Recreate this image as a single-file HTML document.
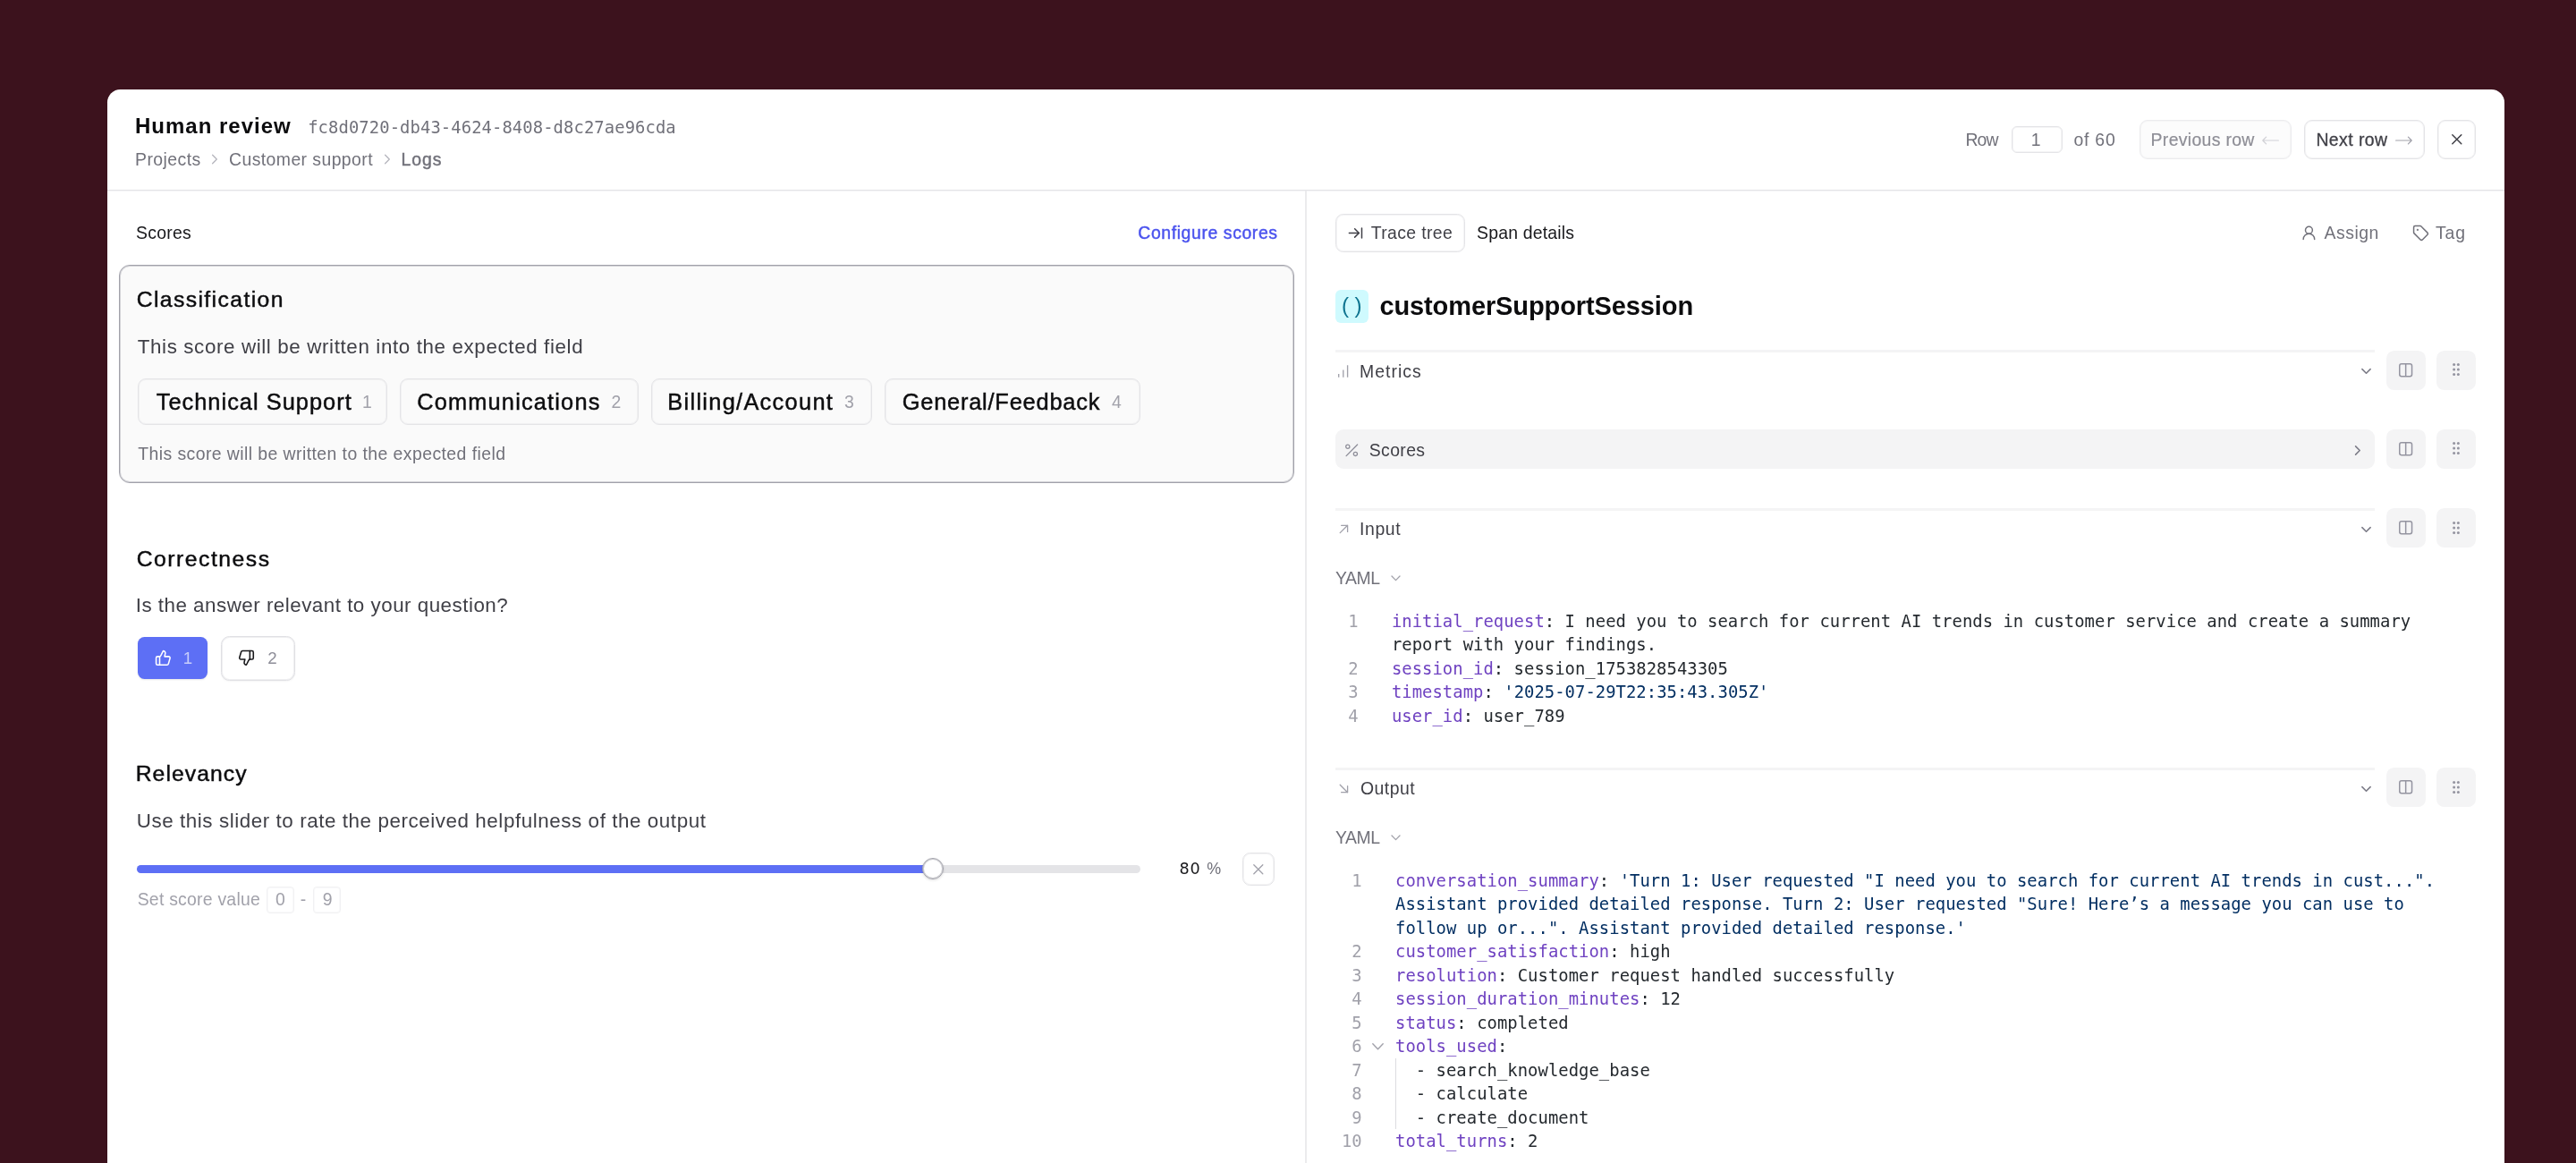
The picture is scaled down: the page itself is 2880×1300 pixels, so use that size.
<!DOCTYPE html>
<html lang="en"><head><meta charset="utf-8"><title>Human review</title>
<style>
html,body{margin:0;padding:0;}
body{width:2880px;height:1300px;overflow:hidden;background:#3c121d;font-family:"Liberation Sans",sans-serif;position:relative;}
#wrap{position:absolute;left:0;top:0;width:2880px;height:1300px;overflow:hidden;will-change:transform;}
#modal{position:absolute;left:120px;top:100px;width:2680px;height:1300px;background:#fff;border-radius:14.5px 14.5px 0 0;}
.t{position:absolute;white-space:pre;}
.b{position:absolute;box-sizing:border-box;}
svg{position:absolute;overflow:visible;}
.code{position:absolute;letter-spacing:0.048px;font-family:"DejaVu Sans Mono","Liberation Mono",monospace;font-size:18.85px;line-height:26.5px;color:#24292e;white-space:pre;}
.ln{position:absolute;font-family:"DejaVu Sans Mono","Liberation Mono",monospace;font-size:18.85px;line-height:26.5px;color:#a1a1aa;white-space:pre;text-align:right;}
.k{color:#6f42c1;}
.s{color:#032f62;}
@media (min-resolution:1.5dppx) and (max-width:1500px){html{zoom:.5;}}

</style></head>
<body>
<div id="wrap">
<div id="modal"></div>
<!-- header -->
<div class="b" style="left:120px;top:212px;width:2680px;height:2px;background:linear-gradient(#e4e4e7 50%,#f3f3f5 50%)"></div>
<div class="b" style="left:1459px;top:213px;width:2px;height:1100px;background:#ebebed"></div>
<div class="b" style="left:2249px;top:140.5px;width:56.5px;height:30.5px;border:1px solid #e4e4e7;box-shadow:inset 0 0 0 1px #e4e4e766;border-radius:6px;background:#fff"></div>
<div class="b" style="left:2391.5px;top:134px;width:170.5px;height:43.5px;border:1px solid #ececee;box-shadow:inset 0 0 0 1px #ececee66;border-radius:9px;background:#fcfcfc"></div>
<div class="b" style="left:2575.7px;top:134px;width:135.8px;height:43.5px;border:1px solid #e4e4e7;box-shadow:inset 0 0 0 1px #e4e4e766;border-radius:9px;background:#fff"></div>
<div class="b" style="left:2725px;top:134px;width:42.7px;height:43.5px;border:1px solid #e4e4e7;box-shadow:inset 0 0 0 1px #e4e4e766;border-radius:9px;background:#fff"></div>
<!-- breadcrumb chevrons -->
<svg style="left:235.7px;top:172.4px" width="8" height="12" viewBox="0 0 8 12" fill="none" stroke="#b5b5bd" stroke-width="1.3" stroke-linecap="round" stroke-linejoin="round"><path d="M1.6 1.2 L6.3 6 L1.6 10.8"/></svg>
<svg style="left:428.6px;top:172.4px" width="8" height="12" viewBox="0 0 8 12" fill="none" stroke="#b5b5bd" stroke-width="1.3" stroke-linecap="round" stroke-linejoin="round"><path d="M1.6 1.2 L6.3 6 L1.6 10.8"/></svg>
<!-- arrows prev/next -->
<svg style="left:2529.4px;top:151.1px" width="19" height="12" viewBox="0 0 19 12" fill="none" stroke="#d0d0d5" stroke-width="1.2" stroke-linecap="round" stroke-linejoin="round"><path d="M18.4 6 H0.8 M4.6 2.2 L0.8 6 L4.6 9.8"/></svg>
<svg style="left:2677.8px;top:151.1px" width="19" height="12" viewBox="0 0 19 12" fill="none" stroke="#a1a1aa" stroke-width="1.2" stroke-linecap="round" stroke-linejoin="round"><path d="M0.6 6 H18.2 M14.4 2.2 L18.2 6 L14.4 9.8"/></svg>
<!-- close X -->
<svg style="left:2740.6px;top:149.9px" width="11.6" height="11.6" viewBox="0 0 11.6 11.6" fill="none" stroke="#3f3f46" stroke-width="1.5" stroke-linecap="round"><path d="M0.8 0.8 L10.8 10.8 M10.8 0.8 L0.8 10.8"/></svg>

<!-- classification card -->
<div class="b" style="left:133px;top:296px;width:1313.5px;height:243.5px;border:1px solid #a1a1aa;box-shadow:inset 0 0 0 1px #a1a1aa70;border-radius:12px;background:#fafafa"></div>
<div class="b" style="left:153.8px;top:423px;width:279.4px;height:52px;border:1px solid #e4e4e7;box-shadow:inset 0 0 0 1px #e4e4e766;border-radius:9px;background:#fafafa"></div>
<div class="b" style="left:446.6px;top:423px;width:267.8px;height:52px;border:1px solid #e4e4e7;box-shadow:inset 0 0 0 1px #e4e4e766;border-radius:9px;background:#fafafa"></div>
<div class="b" style="left:727.8px;top:423px;width:247.6px;height:52px;border:1px solid #e4e4e7;box-shadow:inset 0 0 0 1px #e4e4e766;border-radius:9px;background:#fafafa"></div>
<div class="b" style="left:989.2px;top:423px;width:285.7px;height:52px;border:1px solid #e4e4e7;box-shadow:inset 0 0 0 1px #e4e4e766;border-radius:9px;background:#fafafa"></div>

<!-- thumbs -->
<div class="b" style="left:154px;top:712px;width:78px;height:47.2px;border-radius:7.5px;background:#5d6ff5;box-shadow:0 1px 2px rgba(0,0,0,.10)"></div>
<div class="b" style="left:246.6px;top:711px;width:83.2px;height:49.5px;border:1px solid #e0e0e4;border-radius:9.5px;background:#fff;box-shadow:inset 0 0 0 1px #e0e0e480,0 1px 2px rgba(0,0,0,.04)"></div>
<svg style="left:173.2px;top:726.4px" width="18.85" height="18.85" viewBox="0 0 24 24" fill="none" stroke="#fff" stroke-width="2" stroke-linecap="round" stroke-linejoin="round"><path d="M7 10v12"/><path d="M15 5.88 14 10h5.83a2 2 0 0 1 1.92 2.56l-2.33 8A2 2 0 0 1 17.5 22H4a2 2 0 0 1-2-2v-8a2 2 0 0 1 2-2h2.76a2 2 0 0 0 1.79-1.11L12 2a3.13 3.13 0 0 1 3 3.88Z"/></svg>
<svg style="left:266.3px;top:726.4px" width="18.85" height="18.85" viewBox="0 0 24 24" fill="none" stroke="#18181b" stroke-width="2" stroke-linecap="round" stroke-linejoin="round"><path d="M17 14V2"/><path d="M9 18.12 10 14H4.17a2 2 0 0 1-1.92-2.56l2.33-8A2 2 0 0 1 6.5 2H20a2 2 0 0 1 2 2v8a2 2 0 0 1-2 2h-2.76a2 2 0 0 0-1.79 1.11L12 22a3.13 3.13 0 0 1-3-3.88Z"/></svg>

<!-- slider -->
<div class="b" style="left:153px;top:966.5px;width:1121.7px;height:9.7px;border-radius:5px;background:#e4e4e7"></div>
<div class="b" style="left:153px;top:966.5px;width:890px;height:9.7px;border-radius:5px;background:#5d6ff5"></div>
<div class="b" style="left:1030.8px;top:959.1px;width:24.4px;height:24.4px;border-radius:12.2px;background:#fff;border:1px solid #a1a1aa;box-shadow:inset 0 0 0 1px #a1a1aa80,0 1px 3px rgba(0,0,0,.12)"></div>
<div class="b" style="left:1388.9px;top:953.3px;width:36.5px;height:36.3px;border:1px solid #e4e4e7;box-shadow:inset 0 0 0 1px #e4e4e766;border-radius:8.7px;background:#fff"></div>
<svg style="left:1401.4px;top:965.6px" width="11.6" height="11.6" viewBox="0 0 11.6 11.6" fill="none" stroke="#a1a1aa" stroke-width="1.3" stroke-linecap="round"><path d="M0.8 0.8 L10.8 10.8 M10.8 0.8 L0.8 10.8"/></svg>
<div class="b" style="left:297.9px;top:991px;width:30.7px;height:30.2px;border:1px solid #f1f1f3;box-shadow:inset 0 0 0 1px #f1f1f366;border-radius:4px;background:#fff"></div>
<div class="b" style="left:350.4px;top:991px;width:30.7px;height:30.2px;border:1px solid #f1f1f3;box-shadow:inset 0 0 0 1px #f1f1f366;border-radius:4px;background:#fff"></div>

<!-- right panel top -->
<div class="b" style="left:1492.7px;top:238.8px;width:145.2px;height:43.6px;border:1px solid #e4e4e7;box-shadow:inset 0 0 0 1px #e4e4e766;border-radius:8.7px;background:#fff"></div>
<svg style="left:1506.3px;top:251.2px" width="18.85" height="18.85" viewBox="0 0 24 24" fill="none" stroke="#3f3f46" stroke-width="1.9" stroke-linecap="round" stroke-linejoin="round"><path d="M17 12H3"/><path d="m11 18 6-6-6-6"/><path d="M21 5v14"/></svg>
<svg style="left:2572.1px;top:251.2px" width="18.85" height="18.85" viewBox="0 0 24 24" fill="none" stroke="#71717a" stroke-width="1.9" stroke-linecap="round" stroke-linejoin="round"><circle cx="12" cy="8" r="5"/><path d="M20 21a8 8 0 0 0-16 0"/></svg>
<svg style="left:2697.4px;top:251.3px" width="18.85" height="18.85" viewBox="0 0 24 24" fill="none" stroke="#71717a" stroke-width="1.9" stroke-linecap="round" stroke-linejoin="round"><path d="M12.586 2.586A2 2 0 0 0 11.172 2H4a2 2 0 0 0-2 2v7.172a2 2 0 0 0 .586 1.414l8.704 8.704a2.426 2.426 0 0 0 3.42 0l6.58-6.58a2.426 2.426 0 0 0 0-3.42z"/><circle cx="7.5" cy="7.5" r=".5" fill="#71717a"/></svg>
<div class="b" style="left:1492.5px;top:323.8px;width:37.6px;height:37.7px;border-radius:6px;background:#cffafe"></div>

<!-- section lines -->
<div class="b" style="left:1492.5px;top:391.3px;width:1162.5px;height:3px;background:#f4f4f5"></div>
<div class="b" style="left:1492.5px;top:480px;width:1162.5px;height:44px;border-radius:9px;background:#f4f4f5"></div>
<div class="b" style="left:1492.5px;top:568px;width:1162.5px;height:3px;background:#f4f4f5"></div>
<div class="b" style="left:1492.5px;top:858px;width:1162.5px;height:3px;background:#f4f4f5"></div>
<svg style="left:1494px;top:406px" width="16" height="18" viewBox="0 0 16 18" fill="none" stroke="#a1a1aa" stroke-width="1.35"><path d="M2.7 15.8 V11.9 M7.8 15.8 V7.4 M12.6 15.8 V2.2"/></svg>
<svg style="left:1503px;top:495px" width="17" height="17" viewBox="0 0 17 17" fill="none" stroke="#8e8e99" stroke-width="1.3" stroke-linecap="round"><path d="M14.6 2 L2.1 14.6"/><circle cx="3.8" cy="4.2" r="2.1"/><circle cx="12.4" cy="12.4" r="2.1"/></svg>
<svg style="left:1496.5px;top:586px" width="11" height="11" viewBox="0 0 11 11" fill="none" stroke="#a1a1aa" stroke-width="1.3" stroke-linecap="round" stroke-linejoin="round"><path d="M1.2 9.6 L9.6 1.3 M2.6 1.3 H9.6 V8.4"/></svg>
<svg style="left:1496.5px;top:876px" width="11" height="11" viewBox="0 0 11 11" fill="none" stroke="#a1a1aa" stroke-width="1.3" stroke-linecap="round" stroke-linejoin="round"><path d="M1.2 1.3 L9.6 9.7 M2.6 9.7 H9.6 V2.6"/></svg>
<svg style="left:1554.5px;top:643.1px" width="11" height="7" viewBox="0 0 11 7" fill="none" stroke="#a1a1aa" stroke-width="1.3" stroke-linecap="round" stroke-linejoin="round"><path d="M1 1 L5.5 5.6 L10 1"/></svg>
<svg style="left:1554.5px;top:933.2px" width="11" height="7" viewBox="0 0 11 7" fill="none" stroke="#a1a1aa" stroke-width="1.3" stroke-linecap="round" stroke-linejoin="round"><path d="M1 1 L5.5 5.6 L10 1"/></svg>
<svg style="left:1534.2px;top:1166px" width="13" height="8" viewBox="0 0 13 8" fill="none" stroke="#a1a1aa" stroke-width="1.4" stroke-linecap="round" stroke-linejoin="round"><path d="M0.8 0.8 L6.5 6.8 L12.2 0.8"/></svg>
<div class="b" style="left:1560px;top:1183.3px;width:1.3px;height:79.2px;background:#dcdce0"></div>
<div class="b" style="left:2667.8px;top:391.5px;width:44px;height:44px;border-radius:8.7px;background:#f4f4f5"></div>
<div class="b" style="left:2724.3px;top:391.5px;width:44px;height:44px;border-radius:8.7px;background:#f4f4f5"></div>
<svg style="left:2681.95px;top:405.80px" width="15.3" height="15.5" viewBox="0 0 15.3 15.5" fill="none" stroke="#9494a0" stroke-width="1.5" stroke-linejoin="round"><rect x="0.75" y="0.75" width="13.8" height="14" rx="2.2"/><path d="M7.65 0.75 V14.75"/></svg>
<svg style="left:2736.35px;top:403.05px" width="20" height="20" viewBox="0 0 20 20" fill="#9494a0"><circle cx="7.65" cy="4.5" r="1.5"/><circle cx="7.65" cy="10" r="1.5"/><circle cx="7.65" cy="15.5" r="1.5"/><circle cx="12.35" cy="4.5" r="1.5"/><circle cx="12.35" cy="10" r="1.5"/><circle cx="12.35" cy="15.5" r="1.5"/></svg>
<div class="b" style="left:2667.8px;top:479.6px;width:44px;height:44px;border-radius:8.7px;background:#f4f4f5"></div>
<div class="b" style="left:2724.3px;top:479.6px;width:44px;height:44px;border-radius:8.7px;background:#f4f4f5"></div>
<svg style="left:2681.95px;top:493.90px" width="15.3" height="15.5" viewBox="0 0 15.3 15.5" fill="none" stroke="#9494a0" stroke-width="1.5" stroke-linejoin="round"><rect x="0.75" y="0.75" width="13.8" height="14" rx="2.2"/><path d="M7.65 0.75 V14.75"/></svg>
<svg style="left:2736.35px;top:491.15px" width="20" height="20" viewBox="0 0 20 20" fill="#9494a0"><circle cx="7.65" cy="4.5" r="1.5"/><circle cx="7.65" cy="10" r="1.5"/><circle cx="7.65" cy="15.5" r="1.5"/><circle cx="12.35" cy="4.5" r="1.5"/><circle cx="12.35" cy="10" r="1.5"/><circle cx="12.35" cy="15.5" r="1.5"/></svg>
<div class="b" style="left:2667.8px;top:568.0px;width:44px;height:44px;border-radius:8.7px;background:#f4f4f5"></div>
<div class="b" style="left:2724.3px;top:568.0px;width:44px;height:44px;border-radius:8.7px;background:#f4f4f5"></div>
<svg style="left:2681.95px;top:582.30px" width="15.3" height="15.5" viewBox="0 0 15.3 15.5" fill="none" stroke="#9494a0" stroke-width="1.5" stroke-linejoin="round"><rect x="0.75" y="0.75" width="13.8" height="14" rx="2.2"/><path d="M7.65 0.75 V14.75"/></svg>
<svg style="left:2736.35px;top:579.55px" width="20" height="20" viewBox="0 0 20 20" fill="#9494a0"><circle cx="7.65" cy="4.5" r="1.5"/><circle cx="7.65" cy="10" r="1.5"/><circle cx="7.65" cy="15.5" r="1.5"/><circle cx="12.35" cy="4.5" r="1.5"/><circle cx="12.35" cy="10" r="1.5"/><circle cx="12.35" cy="15.5" r="1.5"/></svg>
<div class="b" style="left:2667.8px;top:858.1px;width:44px;height:44px;border-radius:8.7px;background:#f4f4f5"></div>
<div class="b" style="left:2724.3px;top:858.1px;width:44px;height:44px;border-radius:8.7px;background:#f4f4f5"></div>
<svg style="left:2681.95px;top:872.40px" width="15.3" height="15.5" viewBox="0 0 15.3 15.5" fill="none" stroke="#9494a0" stroke-width="1.5" stroke-linejoin="round"><rect x="0.75" y="0.75" width="13.8" height="14" rx="2.2"/><path d="M7.65 0.75 V14.75"/></svg>
<svg style="left:2736.35px;top:869.65px" width="20" height="20" viewBox="0 0 20 20" fill="#9494a0"><circle cx="7.65" cy="4.5" r="1.5"/><circle cx="7.65" cy="10" r="1.5"/><circle cx="7.65" cy="15.5" r="1.5"/><circle cx="12.35" cy="4.5" r="1.5"/><circle cx="12.35" cy="10" r="1.5"/><circle cx="12.35" cy="15.5" r="1.5"/></svg>
<svg style="left:2638.95px;top:411.00px" width="13" height="8" viewBox="0 0 13 8" fill="none" stroke="#7c7c88" stroke-width="1.6" stroke-linecap="round" stroke-linejoin="round"><path d="M1.9 1.6 L6.5 6.2 L11.1 1.6"/></svg>
<svg style="left:2638.95px;top:587.50px" width="13" height="8" viewBox="0 0 13 8" fill="none" stroke="#7c7c88" stroke-width="1.6" stroke-linecap="round" stroke-linejoin="round"><path d="M1.9 1.6 L6.5 6.2 L11.1 1.6"/></svg>
<svg style="left:2638.95px;top:877.60px" width="13" height="8" viewBox="0 0 13 8" fill="none" stroke="#7c7c88" stroke-width="1.6" stroke-linecap="round" stroke-linejoin="round"><path d="M1.9 1.6 L6.5 6.2 L11.1 1.6"/></svg>
<svg style="left:2631.7px;top:496.9px" width="8" height="13" viewBox="0 0 8 13" fill="none" stroke="#7c7c88" stroke-width="1.6" stroke-linecap="round" stroke-linejoin="round"><path d="M1.6 1.9 L6.2 6.5 L1.6 11.1"/></svg>

<div class="t" style='left:151.0px;top:129.00px;font-size:24.0px;line-height:24.0px;font-weight:700;color:#0c0c0e;letter-spacing:0.994px;'>Human review</div>
<div class="t" style='left:344.2px;top:134.00px;font-size:18.85px;line-height:18.85px;font-weight:400;color:#71717a;letter-spacing:0.089px;font-family:"DejaVu Sans Mono", "Liberation Mono", monospace;'>fc8d0720-db43-4624-8408-d8c27ae96cda</div>
<div class="t" style='left:151.0px;top:169.00px;font-size:19.42px;line-height:19.42px;font-weight:400;color:#71717a;letter-spacing:0.442px;'>Projects</div>
<div class="t" style='left:256.0px;top:169.00px;font-size:19.42px;line-height:19.42px;font-weight:400;color:#71717a;letter-spacing:0.423px;'>Customer support</div>
<div class="t" style='left:448.4px;top:169.00px;font-size:19.42px;line-height:19.42px;font-weight:400;color:#71717a;letter-spacing:0.970px;-webkit-text-stroke:0.45px #71717a;'>Logs</div>
<div class="t" style='left:2197.4px;top:147.00px;font-size:19.42px;line-height:19.42px;font-weight:400;color:#71717a;letter-spacing:-0.907px;'>Row</div>
<div class="t" style='left:2270.7px;top:147.00px;font-size:19.42px;line-height:19.42px;font-weight:400;color:#71717a;'>1</div>
<div class="t" style='left:2318.6px;top:147.00px;font-size:19.42px;line-height:19.42px;font-weight:400;color:#71717a;letter-spacing:0.730px;'>of 60</div>
<div class="t" style='left:2404.6px;top:147.00px;font-size:19.42px;line-height:19.42px;font-weight:400;color:#8e8e96;letter-spacing:0.322px;-webkit-text-stroke:0.2px #8e8e96;'>Previous row</div>
<div class="t" style='left:2589.4px;top:147.00px;font-size:19.42px;line-height:19.42px;font-weight:400;color:#3f3f46;letter-spacing:0.448px;-webkit-text-stroke:0.3px #3f3f46;'>Next row</div>
<div class="t" style='left:152.0px;top:251.00px;font-size:19.42px;line-height:19.42px;font-weight:400;color:#18181b;letter-spacing:0.259px;'>Scores</div>
<div class="t" style='left:1272.3px;top:251.00px;font-size:19.42px;line-height:19.42px;font-weight:400;color:#4b53ee;letter-spacing:0.600px;-webkit-text-stroke:0.45px #4b53ee;'>Configure scores</div>
<div class="t" style='left:152.7px;top:323.00px;font-size:24.72px;line-height:24.72px;font-weight:400;color:#0c0c0e;letter-spacing:1.394px;-webkit-text-stroke:0.45px #0c0c0e;'>Classification</div>
<div class="t" style='left:153.7px;top:377.00px;font-size:22.4px;line-height:22.4px;font-weight:400;color:#3f3f46;letter-spacing:0.612px;'>This score will be written into the expected field</div>
<div class="t" style='left:174.7px;top:437.00px;font-size:25.39px;line-height:25.39px;font-weight:400;color:#0c0c0e;letter-spacing:1.021px;-webkit-text-stroke:0.45px #0c0c0e;'>Technical Support</div>
<div class="t" style='left:405.1px;top:440.00px;font-size:19.42px;line-height:19.42px;font-weight:400;color:#a1a1aa;'>1</div>
<div class="t" style='left:466.2px;top:437.00px;font-size:25.39px;line-height:25.39px;font-weight:400;color:#0c0c0e;letter-spacing:1.169px;-webkit-text-stroke:0.45px #0c0c0e;'>Communications</div>
<div class="t" style='left:683.5px;top:440.00px;font-size:19.42px;line-height:19.42px;font-weight:400;color:#a1a1aa;'>2</div>
<div class="t" style='left:746.3px;top:437.00px;font-size:25.39px;line-height:25.39px;font-weight:400;color:#0c0c0e;letter-spacing:1.294px;-webkit-text-stroke:0.45px #0c0c0e;'>Billing/Account</div>
<div class="t" style='left:944.0px;top:440.00px;font-size:19.42px;line-height:19.42px;font-weight:400;color:#a1a1aa;'>3</div>
<div class="t" style='left:1008.7px;top:437.00px;font-size:25.39px;line-height:25.39px;font-weight:400;color:#0c0c0e;letter-spacing:0.795px;-webkit-text-stroke:0.45px #0c0c0e;'>General/Feedback</div>
<div class="t" style='left:1243.0px;top:440.00px;font-size:19.42px;line-height:19.42px;font-weight:400;color:#a1a1aa;'>4</div>
<div class="t" style='left:154.2px;top:498.00px;font-size:19.42px;line-height:19.42px;font-weight:400;color:#71717a;letter-spacing:0.432px;'>This score will be written to the expected field</div>
<div class="t" style='left:152.7px;top:613.00px;font-size:24.72px;line-height:24.72px;font-weight:400;color:#0c0c0e;letter-spacing:1.511px;-webkit-text-stroke:0.45px #0c0c0e;'>Correctness</div>
<div class="t" style='left:151.7px;top:666.00px;font-size:22.4px;line-height:22.4px;font-weight:400;color:#3f3f46;letter-spacing:0.487px;'>Is the answer relevant to your question?</div>
<div class="t" style='left:204.8px;top:727.00px;font-size:18.75px;line-height:18.75px;font-weight:400;color:#c7cdfb;'>1</div>
<div class="t" style='left:299.3px;top:727.00px;font-size:18.75px;line-height:18.75px;font-weight:400;color:#8e8e99;'>2</div>
<div class="t" style='left:151.7px;top:853.00px;font-size:24.72px;line-height:24.72px;font-weight:400;color:#0c0c0e;letter-spacing:1.055px;-webkit-text-stroke:0.45px #0c0c0e;'>Relevancy</div>
<div class="t" style='left:152.7px;top:907.00px;font-size:22.4px;line-height:22.4px;font-weight:400;color:#3f3f46;letter-spacing:0.565px;'>Use this slider to rate the perceived helpfulness of the output</div>
<div class="t" style='left:1318.4px;top:963.00px;font-size:17.6px;line-height:17.6px;font-weight:400;color:#18181b;letter-spacing:1.003px;font-family:"DejaVu Sans", "Liberation Sans", sans-serif;'>80</div>
<div class="t" style='left:1349.3px;top:963.00px;font-size:17.92px;line-height:17.92px;font-weight:400;color:#71717a;'>%</div>
<div class="t" style='left:153.7px;top:996.00px;font-size:19.42px;line-height:19.42px;font-weight:400;color:#a1a1aa;letter-spacing:0.238px;'>Set score value</div>
<div class="t" style='left:308.0px;top:996.00px;font-size:19.42px;line-height:19.42px;font-weight:400;color:#a1a1aa;'>0</div>
<div class="t" style='left:335.8px;top:996.00px;font-size:19.42px;line-height:19.42px;font-weight:400;color:#a1a1aa;'>-</div>
<div class="t" style='left:360.8px;top:996.00px;font-size:19.42px;line-height:19.42px;font-weight:400;color:#a1a1aa;'>9</div>
<div class="t" style='left:1532.8px;top:251.00px;font-size:19.42px;line-height:19.42px;font-weight:400;color:#3f3f46;letter-spacing:0.353px;'>Trace tree</div>
<div class="t" style='left:1651.1px;top:251.00px;font-size:19.42px;line-height:19.42px;font-weight:400;color:#18181b;letter-spacing:0.181px;'>Span details</div>
<div class="t" style='left:2598.4px;top:251.00px;font-size:19.42px;line-height:19.42px;font-weight:400;color:#71717a;letter-spacing:0.549px;'>Assign</div>
<div class="t" style='left:2723.1px;top:251.00px;font-size:19.42px;line-height:19.42px;font-weight:400;color:#71717a;letter-spacing:0.798px;'>Tag</div>
<div class="t" style='left:1499.9px;top:330.00px;font-size:24.21px;line-height:24.21px;font-weight:400;color:#0e7490;letter-spacing:6.635px;'>()</div>
<div class="t" style='left:1542.4px;top:328.00px;font-size:29.0px;line-height:29.0px;font-weight:700;color:#0c0c0e;letter-spacing:-0.104px;'>customerSupportSession</div>
<div class="t" style='left:1520.0px;top:406.00px;font-size:19.42px;line-height:19.42px;font-weight:400;color:#3f3f46;letter-spacing:1.029px;'>Metrics</div>
<div class="t" style='left:1530.8px;top:494.00px;font-size:19.42px;line-height:19.42px;font-weight:400;color:#3f3f46;letter-spacing:0.359px;'>Scores</div>
<div class="t" style='left:1520.0px;top:582.00px;font-size:19.42px;line-height:19.42px;font-weight:400;color:#3f3f46;letter-spacing:0.605px;'>Input</div>
<div class="t" style='left:1493.0px;top:637.00px;font-size:19.42px;line-height:19.42px;font-weight:400;color:#71717a;letter-spacing:-0.438px;'>YAML</div>
<div class="t" style='left:1521.0px;top:872.00px;font-size:19.42px;line-height:19.42px;font-weight:400;color:#3f3f46;letter-spacing:0.485px;'>Output</div>
<div class="t" style='left:1493.0px;top:927.00px;font-size:19.42px;line-height:19.42px;font-weight:400;color:#71717a;letter-spacing:-0.438px;'>YAML</div>
<div class="ln" style="left:1478.6px;width:40px;top:681.75px">1

2
3
4</div>
<div class="code" style="left:1555.9px;top:681.75px"><span class="k">initial_request</span>: I need you to search for current AI trends in customer service and create a summary
report with your findings.
<span class="k">session_id</span>: session_1753828543305
<span class="k">timestamp</span>: <span class="s">'2025-07-29T22:35:43.305Z'</span>
<span class="k">user_id</span>: user_789</div>
<div class="ln" style="left:1482.6px;width:40px;top:971.75px">1


2
3
4
5
6
7
8
9
10</div>
<div class="code" style="left:1560px;top:971.75px"><span class="k">conversation_summary</span>: <span class="s">'Turn 1: User requested "I need you to search for current AI trends in cust...".
Assistant provided detailed response. Turn 2: User requested "Sure! Here’s a message you can use to
follow up or...". Assistant provided detailed response.'</span>
<span class="k">customer_satisfaction</span>: high
<span class="k">resolution</span>: Customer request handled successfully
<span class="k">session_duration_minutes</span>: 12
<span class="k">status</span>: completed
<span class="k">tools_used</span>:
  - search_knowledge_base
  - calculate
  - create_document
<span class="k">total_turns</span>: 2</div>

</div>
</body></html>
